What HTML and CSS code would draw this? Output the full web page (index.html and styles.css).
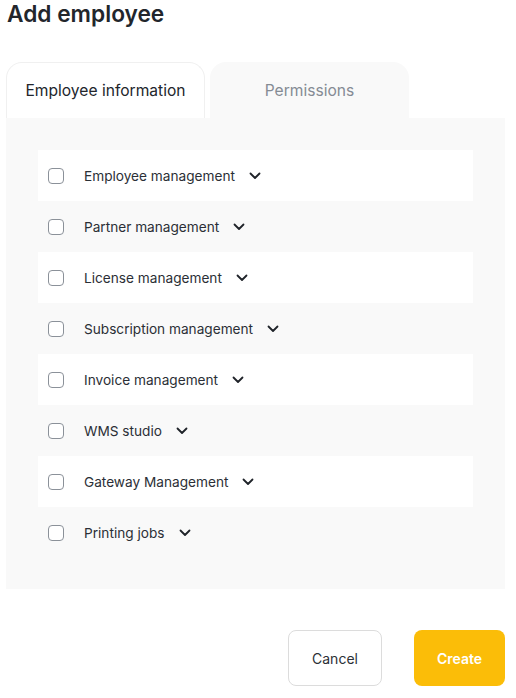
FILE: index.html
```html
<!DOCTYPE html>
<html lang="en">
<head>
<meta charset="utf-8">
<title>Add employee</title>
<link rel="stylesheet" href="styles.css">
</head>
<body>
<div class="page">
  <h1 class="title">Add employee</h1>
  <div class="tabs">
    <div class="tab tab-active">Employee information</div>
    <div class="tab tab-inactive">Permissions</div>
  </div>
  <div class="panel">
    <div class="row row-white"><span class="check"></span><span class="label">Employee management</span><svg class="chev" viewBox="0 0 12 8" width="12" height="8"><path d="M1.5 1.5 L6 6 L10.5 1.5" fill="none" stroke="#1f2329" stroke-width="1.8" stroke-linecap="round" stroke-linejoin="round"/></svg></div>
    <div class="row"><span class="check"></span><span class="label">Partner management</span><svg class="chev" viewBox="0 0 12 8" width="12" height="8"><path d="M1.5 1.5 L6 6 L10.5 1.5" fill="none" stroke="#1f2329" stroke-width="1.8" stroke-linecap="round" stroke-linejoin="round"/></svg></div>
    <div class="row row-white"><span class="check"></span><span class="label">License management</span><svg class="chev" viewBox="0 0 12 8" width="12" height="8"><path d="M1.5 1.5 L6 6 L10.5 1.5" fill="none" stroke="#1f2329" stroke-width="1.8" stroke-linecap="round" stroke-linejoin="round"/></svg></div>
    <div class="row"><span class="check"></span><span class="label">Subscription management</span><svg class="chev" viewBox="0 0 12 8" width="12" height="8"><path d="M1.5 1.5 L6 6 L10.5 1.5" fill="none" stroke="#1f2329" stroke-width="1.8" stroke-linecap="round" stroke-linejoin="round"/></svg></div>
    <div class="row row-white"><span class="check"></span><span class="label">Invoice management</span><svg class="chev" viewBox="0 0 12 8" width="12" height="8"><path d="M1.5 1.5 L6 6 L10.5 1.5" fill="none" stroke="#1f2329" stroke-width="1.8" stroke-linecap="round" stroke-linejoin="round"/></svg></div>
    <div class="row"><span class="check"></span><span class="label">WMS studio</span><svg class="chev" viewBox="0 0 12 8" width="12" height="8"><path d="M1.5 1.5 L6 6 L10.5 1.5" fill="none" stroke="#1f2329" stroke-width="1.8" stroke-linecap="round" stroke-linejoin="round"/></svg></div>
    <div class="row row-white"><span class="check"></span><span class="label">Gateway Management</span><svg class="chev" viewBox="0 0 12 8" width="12" height="8"><path d="M1.5 1.5 L6 6 L10.5 1.5" fill="none" stroke="#1f2329" stroke-width="1.8" stroke-linecap="round" stroke-linejoin="round"/></svg></div>
    <div class="row"><span class="check"></span><span class="label">Printing jobs</span><svg class="chev" viewBox="0 0 12 8" width="12" height="8"><path d="M1.5 1.5 L6 6 L10.5 1.5" fill="none" stroke="#1f2329" stroke-width="1.8" stroke-linecap="round" stroke-linejoin="round"/></svg></div>
  </div>
  <div class="actions">
    <button class="btn btn-cancel">Cancel</button>
    <button class="btn btn-create">Create</button>
  </div>
</div>
</body>
</html>
```
FILE: styles.css
```css
html, body {
  margin: 0;
  padding: 0;
  background: #ffffff;
}
body {
  font-family: Inter, "Noto Sans", "Liberation Sans", sans-serif;
  color: #2b2f36;
}
.page {
  width: 499px;
  margin-left: 6px;
}
.title {
  margin: 0 0 0 1px;
  font-size: 22.7px;
  line-height: 28px;
  font-weight: 600;
  color: #22262c;
}
.tabs {
  display: flex;
  gap: 5px;
  margin-top: 34px;
}
.tab {
  box-sizing: border-box;
  width: 199px;
  height: 56px;
  display: flex;
  align-items: center;
  justify-content: center;
  font-size: 15.6px;
  border-radius: 16px 16px 0 0;
}
.tab-active {
  background: #ffffff;
  border: 1px solid #f0f0f0;
  border-bottom: none;
  color: #22262c;
}
.tab-inactive {
  background: #f9f9f9;
  color: #858b94;
}
.panel {
  background: #f9f9f9;
  padding: 32px 32px 31px 32px;
}
.row {
  height: 51px;
  display: flex;
  align-items: center;
  padding-left: 10px;
}
.row-white {
  background: #ffffff;
}
.check {
  box-sizing: border-box;
  width: 16px;
  height: 16px;
  border: 1px solid #8b9199;
  border-radius: 4px;
  background: #ffffff;
  flex: none;
}
.label {
  margin-left: 20px;
  font-size: 13.65px;
  color: #2b2f36;
}
.chev {
  margin-left: 14px;
  flex: none;
}
.actions {
  display: flex;
  justify-content: flex-end;
  gap: 32px;
  margin-top: 41px;
}
.btn {
  box-sizing: border-box;
  height: 56px;
  border-radius: 8px;
  font-family: Inter, "Noto Sans", "Liberation Sans", sans-serif;
  font-size: 14px;
  cursor: pointer;
}
.btn-cancel {
  width: 94px;
  background: #ffffff;
  border: 1px solid #dcdcdc;
  color: #2b2f36;
}
.btn-create {
  width: 91px;
  background: #fbbd08;
  border: none;
  color: #ffffff;
  font-weight: 600;
}
```
